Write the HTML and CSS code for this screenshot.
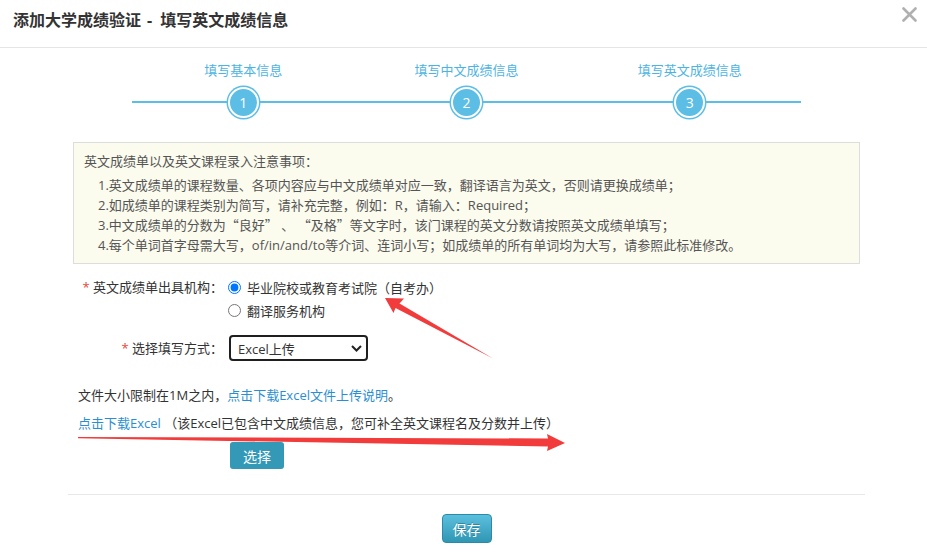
FILE: index.html
```html
<!DOCTYPE html>
<html lang="zh-CN">
<head>
<meta charset="utf-8">
<title>添加大学成绩验证</title>
<link rel="stylesheet" href="styles.css">
</head>
<body>
<div class="page">
  <div class="dlg-header">
    <h3 class="dlg-title">添加大学成绩验证<span class="sep">-</span>填写英文成绩信息</h3>
    <svg class="close" width="15" height="15" viewBox="0 0 15 15"><path d="M1.5 1.5 L13.5 13.5 M13.5 1.5 L1.5 13.5" stroke="#b0b0b0" stroke-width="2.6" stroke-linecap="round"/></svg>
  </div>
  <div class="dlg-body">
    <div class="steps">
      <div class="step">
        <div class="step-label">填写基本信息</div>
        <div class="step-node"><div class="step-circle">1</div></div>
      </div>
      <div class="step">
        <div class="step-label">填写中文成绩信息</div>
        <div class="step-node"><div class="step-circle">2</div></div>
      </div>
      <div class="step">
        <div class="step-label">填写英文成绩信息</div>
        <div class="step-node"><div class="step-circle">3</div></div>
      </div>
    </div>

    <div class="notice">
      <div class="notice-title">英文成绩单以及英文课程录入注意事项：</div>
      <div class="notice-list">
        <div>1.英文成绩单的课程数量、各项内容应与中文成绩单对应一致，翻译语言为英文，否则请更换成绩单；</div>
        <div>2.如成绩单的课程类别为简写，请补充完整，例如：R，请输入：Required；</div>
        <div>3.中文成绩单的分数为<span class="cjk">“良好”</span> 、 <span class="cjk">“及格”</span>等文字时，该门课程的英文分数请按照英文成绩单填写；</div>
        <div>4.每个单词首字母需大写，of/in/and/to等介词、连词小写；如成绩单的所有单词均为大写，请参照此标准修改。</div>
      </div>
    </div>

    <div class="form-row">
      <div class="form-label"><span class="req">*</span> 英文成绩单出具机构：</div>
      <div class="radios">
        <label class="radio-line"><input type="radio" name="org" checked>毕业院校或教育考试院（自考办）</label>
        <label class="radio-line"><input type="radio" name="org">翻译服务机构</label>
      </div>
    </div>

    <div class="form-row method">
      <div class="form-label"><span class="req">*</span> 选择填写方式：</div>
      <div class="select">
        <span>Excel上传</span>
        <svg width="11" height="7" viewBox="0 0 11 7"><polyline points="1,1 5.5,5.5 10,1" fill="none" stroke="#222" stroke-width="2"/></svg>
      </div>
    </div>

    <div class="upload-info">
      <div>文件大小限制在1M之内，<a class="link">点击下载Excel文件上传说明</a>。</div>
      <div><a class="link">点击下载Excel</a> （该Excel已包含中文成绩信息，您可补全英文课程名及分数并上传）</div>
    </div>

    <button class="btn-choose">选择</button>

    <div class="divider"></div>
    <div class="footer">
      <button class="btn-save">保存</button>
    </div>
  </div>

  <svg class="annot" width="927" height="555" viewBox="0 0 927 555">
    <polygon points="385,298 404,298.5 399.5,303.5 493,358.5 395.5,308 393.5,313" fill="#f23b3b"/>
    <polygon points="78,437 548,438.5 547,434 565,443 547,451 548,446.5 78,438.3" fill="#f23b3b"/>
  </svg>
</div>
</body>
</html>
```

FILE: styles.css
```css
body {
  margin: 0;
  background: #fff;
  color: #333;
  font-family: "Open Sans", "Noto Sans CJK SC", sans-serif;
  font-size: 13px;
}

.cjk {
  font-family: "Noto Sans CJK SC", sans-serif;
}

.page {
  position: relative;
  width: 927px;
  height: 555px;
  overflow: hidden;
}

.dlg-header {
  height: 48px;
  box-sizing: border-box;
  border-bottom: 1px solid #e5e5e5;
  display: flex;
  justify-content: space-between;
  align-items: flex-start;
  padding: 9px 10px 0 13px;
}

.dlg-title {
  margin: 0;
  font-size: 16px;
  line-height: 22px;
  font-weight: bold;
  color: #333;
}

.sep {
  margin: 0 8px 0 6px;
}

.close {
  margin-top: -2px;
}

.dlg-body {
  margin-left: 68px;
  width: 797px;
}

.steps {
  width: 670px;
  margin: 12px auto 0;
  display: grid;
  grid-template-columns: repeat(3, 1fr);
}

.step {
  display: flex;
  flex-direction: column;
  align-items: center;
}

.step-label {
  font-size: 13px;
  line-height: 20px;
  color: #4db4e2;
}

.step-node {
  margin-top: 5px;
  width: 100%;
  height: 34px;
  display: flex;
  justify-content: center;
  align-items: center;
  background: linear-gradient(#5cbde5, #5cbde5) center / 100% 2px no-repeat;
}

.step-circle {
  width: 27px;
  height: 27px;
  border-radius: 50%;
  background: #5cbde5;
  border: 2px solid #fff;
  box-shadow: 0 0 0 1.5px #5cbde5;
  color: #fff;
  font-size: 14px;
  line-height: 27px;
  text-align: center;
}

.notice {
  margin: 23px 5px 0;
  border: 1px solid #ddd;
  background: #fbfbee;
  padding: 8px 10px;
  color: #555;
  line-height: 20px;
}

.notice-title {
  margin-bottom: 4px;
}

.notice-list {
  padding-left: 14px;
}

.form-row {
  display: flex;
  margin-top: 12px;
}

.form-label {
  width: 155px;
  text-align: right;
  line-height: 23px;
  color: #333;
}

.req {
  color: #e8473a;
}

.radios {
  margin-left: 5px;
}

.radio-line {
  display: flex;
  align-items: center;
  height: 23px;
}

.radio-line input {
  margin: 0 6px 0 0;
  width: 13px;
  height: 13px;
}

.form-row.method {
  margin-top: 13px;
  align-items: center;
}

.form-row.method .form-label {
  line-height: 26px;
}

.select {
  margin-left: 6px;
  width: 139px;
  height: 26px;
  box-sizing: border-box;
  border: 2px solid #1f1f1f;
  border-radius: 4px;
  display: flex;
  align-items: center;
  justify-content: space-between;
  padding: 0 4px 0 7px;
  color: #333;
}

.upload-info {
  padding-left: 10px;
  margin-top: 20px;
  line-height: 28px;
}

.link {
  color: #2a8fd2;
  text-decoration: none;
}

.btn-choose {
  display: block;
  margin: 5px 0 0 162px;
  width: 54px;
  height: 27px;
  padding: 0;
  border: none;
  border-radius: 3px;
  background: #3399b6;
  color: #fff;
  font-family: inherit;
  font-size: 14px;
}

.divider {
  margin-top: 25px;
  border-top: 1px solid #e8e8e8;
}

.footer {
  display: flex;
  justify-content: center;
  padding-top: 19px;
}

.btn-save {
  width: 50px;
  height: 29px;
  padding: 0;
  border: 1px solid #2b8aa8;
  border-radius: 4px;
  background: linear-gradient(#5bc0de, #2f96b4);
  color: #fff;
  font-family: inherit;
  font-size: 14px;
  text-shadow: 0 -1px 0 rgba(0, 0, 0, 0.25);
}

.annot {
  position: absolute;
  top: 0;
  left: 0;
  pointer-events: none;
}
```
